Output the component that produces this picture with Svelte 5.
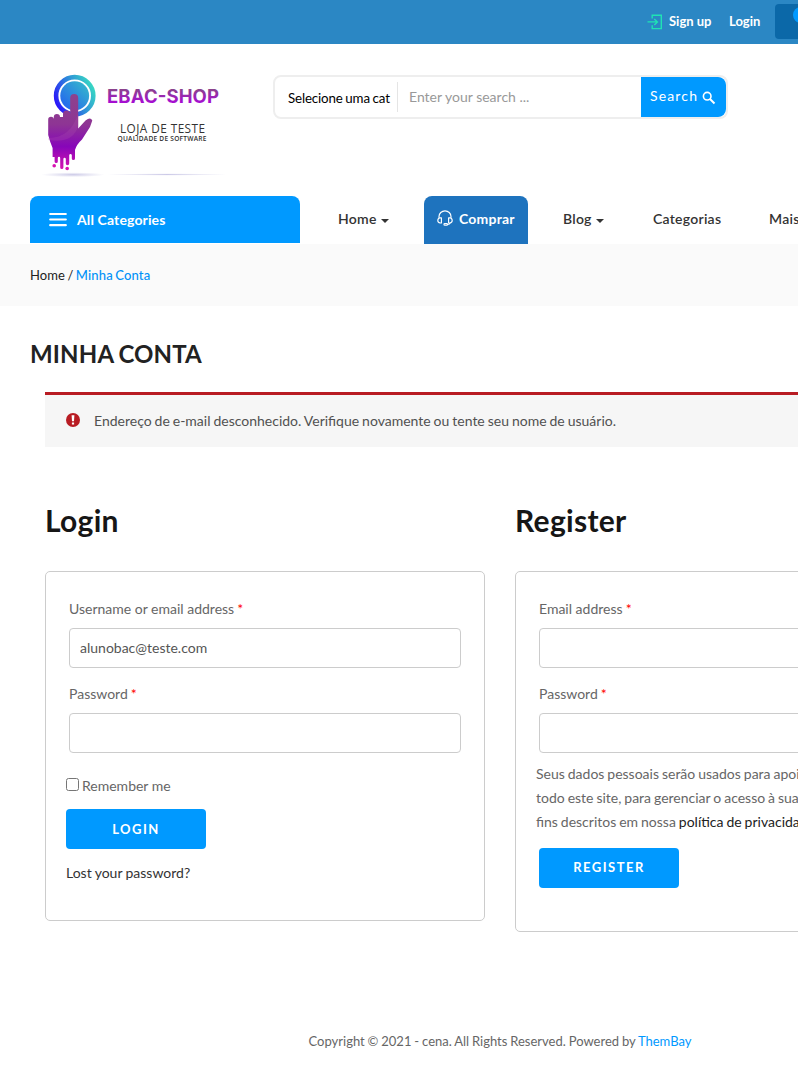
<script>
  let email = $state('alunobac@teste.com');
  let password = $state('');
  let newEmail = $state('');
  let newPassword = $state('');
  let remember = $state(false);
</script>

<div class="viewport">
  <div class="page">
    <div class="topbar">
      <a class="signup" href="#signup">
        <svg width="16" height="16" viewBox="0 0 16 16" fill="none" stroke="#1fe3b4" stroke-width="1.4">
          <path d="M5.2 4.5V1.2H14.3V14.6H5.2V11.3M0.5 7.9H10M7.3 4.9L10.4 7.9L7.3 10.9" />
        </svg>
        <span>Sign up</span>
      </a>
      <a class="signin" href="#login">Login</a>
      <div class="cart"><span class="badge"></span></div>
    </div>

    <header>
      <svg class="logo" width="200" height="125" viewBox="0 0 200 125">
        <defs>
          <linearGradient id="ring" x1="0" y1="0.75" x2="1" y2="0.25">
            <stop offset="0" stop-color="#2a12fa" /><stop offset="0.5" stop-color="#2d85dc" /><stop offset="1" stop-color="#38d8c3" />
          </linearGradient>
          <linearGradient id="disc" x1="0.1" y1="0.9" x2="0.9" y2="0.1">
            <stop offset="0" stop-color="#2466ee" /><stop offset="1" stop-color="#35b5cd" />
          </linearGradient>
          <linearGradient id="hand" x1="0" y1="0" x2="0" y2="1">
            <stop offset="0" stop-color="#8d438d" /><stop offset="0.4" stop-color="#8e3594" /><stop offset="0.7" stop-color="#8706b9" /><stop offset="1" stop-color="#d713b1" />
          </linearGradient>
          <linearGradient id="word" x1="0" y1="0" x2="0" y2="1">
            <stop offset="0.2" stop-color="#8b438d" /><stop offset="0.85" stop-color="#a808d8" />
          </linearGradient>
          <radialGradient id="shade"><stop offset="0" stop-color="#aaa6d8" stop-opacity="0.6" /><stop offset="1" stop-color="#b9b6dd" stop-opacity="0" /></radialGradient>
        </defs>
        <ellipse cx="43" cy="114.7" rx="32" ry="2.4" fill="url(#shade)" />
        <ellipse cx="137" cy="114.5" rx="60" ry="1.2" fill="url(#shade)" />
        <circle cx="44.7" cy="35.7" r="18.6" fill="none" stroke="url(#ring)" stroke-width="4.6" />
        <circle cx="44.7" cy="35.7" r="14.4" fill="url(#disc)" />
        <path fill="url(#hand)" d="M40.200 38a4 4 0 0 1 8 0V68.500L55.500 60.500Q60.500 56.500 62.300 60.500L60 67L52 79.500Q46.500 84.500 45 90V98.500a1.600 1.600 0 0 1-3.200 0V95a1.400 1.400 0 0 0-2.600 0V103.500a1.700 1.700 0 0 1-3.400 0V99a1.200 1.200 0 0 0-2.400 0V107.500a1.500 1.500 0 0 1-3.200 0V98a1.200 1.200 0 0 0-2.400 0V101.500a1.600 1.600 0 0 1-3.200 0V97H22.600V88Q20 82 18.200 75V59.500a2.800 2.800 0 0 1 5.600 0V57a3.100 3.100 0 0 1 6.200 0L33 57V54a3.400 3.400 0 0 1 7.200 0Z" />
        <path fill="#b45ab0" opacity="0.22" d="M18.300 60V78Q41 78 48.200 53V66Q43 84 18.300 80Z" />
        <circle cx="24.200" cy="105.700" r="1.800" fill="#d713b1" />
        <circle cx="37.200" cy="108.500" r="1.800" fill="#d713b1" />
        <text x="77" y="43" textLength="112" font-family="Inter, sans-serif" font-size="18.500" font-weight="700" fill="url(#word)">EBAC-SHOP</text>
        <text x="90" y="73" textLength="85" font-family="'Open Sans', sans-serif" font-size="11.800" fill="#333">LOJA DE TESTE</text>
        <text x="87.500" y="81" textLength="89" font-family="'Open Sans', sans-serif" font-size="6.600" font-weight="600" fill="#303030">QUALIDADE DE SOFTWARE</text>
      </svg>

      <form class="search" onsubmit={(e) => e.preventDefault()}>
        <div class="select">Selecione uma cat</div>
        <input type="text" placeholder="Enter your search ..." />
        <button type="submit">
          <span>Search</span>
          <svg width="14" height="14" viewBox="0 0 14 14" fill="none" stroke="#fff">
            <circle cx="5.200" cy="5.200" r="3.800" stroke-width="1.600" /><path d="M8 8L12.500 12.500" stroke-width="2" />
          </svg>
        </button>
      </form>
    </header>

    <nav>
      <div class="all">
        <svg width="18" height="16" viewBox="0 0 18 16" stroke="#fff" stroke-width="2.200" stroke-linecap="round"><path d="M1.200 2H16.800M1.200 7.500H16.800M1.200 13.200H16.800" /></svg>
        <span>All Categories</span>
      </div>
      <a class="home" href="#home">Home <i class="caret"></i></a>
      <a class="buy" href="#comprar">
        <svg width="16" height="16" viewBox="0 0 16 16" fill="none" stroke="#fff" stroke-width="1.150" stroke-linecap="round" stroke-linejoin="round">
          <path d="M2 8V6.500a6 5.700 0 0 1 12 0V8M4.400 7.800V13H3.200Q0.800 12.500 0.800 10.400T3.200 7.800ZM11.600 7.800V13H12.800Q15.200 12.500 15.200 10.400T12.800 7.800ZM13.500 13Q12.500 14.500 10.800 14.500" />
          <rect x="7" y="13.500" width="3.500" height="1.600" rx="0.700" />
        </svg>
        <span>Comprar</span>
      </a>
      <a class="blog" href="#blog">Blog <i class="caret"></i></a>
      <a class="cats" href="#categorias">Categorias</a>
      <a class="more" href="#mais">Mais</a>
    </nav>

    <div class="crumbs"><a href="#home">Home</a> / <b>Minha Conta</b></div>

    <main>
      <h1>MINHA CONTA</h1>
      <div class="alert">
        <svg width="14" height="14" viewBox="0 0 14 14"><circle cx="7" cy="7" r="7" fill="#b81c23" /><path d="M5.600 2.300H8.400L8 8.200H6ZM5.900 9.400H8.100V11.500H5.900Z" fill="#fff" /></svg>
        <span>Endereço de e-mail desconhecido. Verifique novamente ou tente seu nome de usuário.</span>
      </div>

      <div class="columns">
        <section>
          <h2>Login</h2>
          <form class="card login" onsubmit={(e) => e.preventDefault()}>
            <label for="user">Username or email address <em>*</em></label>
            <input id="user" type="text" bind:value={email} />
            <label for="pass">Password <em>*</em></label>
            <input id="pass" type="password" bind:value={password} />
            <label class="remember"><input type="checkbox" bind:checked={remember} /><span>Remember me</span></label>
            <button type="submit">LOGIN</button>
            <a class="lost" href="#lost">Lost your password?</a>
          </form>
        </section>
        <section>
          <h2>Register</h2>
          <form class="card register" onsubmit={(e) => e.preventDefault()}>
            <label for="mail">Email address <em>*</em></label>
            <input id="mail" type="text" bind:value={newEmail} />
            <label for="newpass">Password <em>*</em></label>
            <input id="newpass" type="password" bind:value={newPassword} />
            <p>Seus dados pessoais serão usados para apoiar<br />todo este site, para gerenciar o acesso à sua<br />fins descritos em nossa <a href="#privacy">política de privacidade</a></p>
            <button type="submit">REGISTER</button>
          </form>
        </section>
      </div>
    </main>

    <footer>Copyright © 2021 - cena. All Rights Reserved. Powered by <a href="#thembay">ThemBay</a></footer>
  </div>
</div>

<style>
  :global(body) { margin: 0; background: #fff; }
  .viewport { width: 100%; height: 1087px; overflow: hidden; font: 14px/24px Lato, sans-serif; color: #666; }
  a { color: inherit; text-decoration: none; }
  .page { width: 1000px; }
  .page :is(*) { box-sizing: border-box; }
  input, button { font-family: inherit; }

  .topbar { height: 44px; background: #2b87c4; display: flex; align-items: flex-start; padding-left: 647px; color: #fff; font-weight: 700; font-size: 13px; }
  .signup { display: flex; align-items: center; gap: 6px; width: 82px; margin-top: 9px; white-space: nowrap; }
  .signup svg { margin-top: 2px; }
  .signin { width: 46px; margin-top: 9px; }
  .cart { width: 130px; height: 35px; margin-top: 4px; border-radius: 4px; background: #0b68a8; position: relative; }
  .badge { position: absolute; left: 18px; top: 3px; width: 16px; height: 16px; border-radius: 50%; background: #09f; }

  header { height: 152px; padding: 16px 0 0 30px; display: flex; align-items: flex-start; }
  .logo { flex: none; }
  .search { display: flex; width: 455px; height: 44px; margin: 15px 0 0 43px; border: 2px solid #eee; border-radius: 8px; overflow: hidden; }
  .select { width: 123px; margin: 5px 0; padding: 4px 0 0 13px; border-right: 1px solid #e5e5e5; color: #000; font-size: 13.333px; letter-spacing: -0.150px; word-spacing: -0.600px; white-space: nowrap; line-height: 24px; }
  .search input { flex: 1; min-width: 0; border: 0; outline: 0; padding: 0 11px 2px; font-size: 14px; color: #666; }
  .search input::placeholder { color: #999; }
  .search button { width: 85px; padding: 0 0 3px 9px; border: 0; border-radius: 0 8px 8px 0; background: #09f; color: #fff; font-size: 14px; letter-spacing: 1.150px; display: flex; align-items: center; gap: 4px; }
  .search button svg { margin-top: 5px; }

  nav { display: flex; height: 48px; padding-left: 30px; line-height: 46px; font-weight: 700; color: #333; white-space: nowrap; letter-spacing: 0.130px; }
  .all { width: 270px; height: 47px; border-radius: 8px 8px 0 0; background: #09f; color: #fff; display: flex; align-items: center; gap: 10px; padding-left: 19px; }
  .home { width: 86px; margin-left: 38px; }
  .home, .blog, .cats, .more { font-weight: 600; letter-spacing: 0.250px; }
  .buy { display: flex; align-items: center; width: 104px; padding-left: 13px; gap: 6px; color: #fff; background: #1e73be; border-radius: 8px 8px 0 0; line-height: 46px; letter-spacing: 0.200px; }
  .buy svg { margin-top: -4px; }
  .buy span { margin-top: -2px; }
  .blog { width: 90px; margin-left: 35px; }
  .cats { width: 116px; }
  .caret { display: inline-block; border: 4px solid transparent; border-top-color: #333; border-bottom: 0; vertical-align: 1px; margin-left: 1px; }

  .crumbs { height: 62px; background: #fafafa; padding: 19px 30px; font-size: 13px; color: #222; word-spacing: -0.900px; }
  .crumbs a { letter-spacing: 0.100px; }
  .crumbs b { color: #0091f8; font-weight: 500; letter-spacing: 0.150px; }

  main { padding: 0 30px; }
  h1 { margin: 0; padding-top: 33px; height: 86px; font-size: 24px; line-height: 30px; font-weight: 700; color: #222; word-spacing: -1px; letter-spacing: 0.150px; }
  .alert { margin-left: 15px; height: 55px; border-top: 3px solid #b81c23; background: #f6f6f6; display: flex; align-items: center; padding-left: 21px; gap: 14px; color: #515151; word-spacing: -0.640px; }
  .alert svg { margin-top: -3px; }
  .columns { display: grid; grid-template-columns: 440px 440px; gap: 30px; align-items: start; padding: 53px 0 0 15px; }
  h2 { margin: 0; height: 71px; line-height: 40px; font-size: 30px; font-weight: 700; color: #161616; letter-spacing: 0.300px; }
  .card { display: flex; flex-direction: column; border: 1px solid #ccc; border-radius: 5px; padding: 25px 23px 0; }
  .login { height: 350px; }
  .register { height: 361px; }
  em { color: #f00; font-style: normal; margin-left: -0.500px; }
  .card > input { height: 40px; margin: 7px 0 14px; border: 1px solid #ccc; border-radius: 4px; padding: 0 10px 2px; font-size: 14px; color: #555; outline: 0; }
  .remember { display: flex; align-items: center; gap: 3px; margin: 7px 0 11px -3px; height: 24px; }
  .remember input { width: 13px; height: 13px; margin: -4px 0 0; }
  .card button { flex: none; width: 140px; height: 40px; border: 0; border-radius: 4px; background: #09f; color: #fff; font-size: 13px; font-weight: 700; letter-spacing: 1.500px; padding: 0; }
  .register button { padding-bottom: 2px; }
  .login button, .lost { margin-left: -3px; }
  .lost { margin-top: 12px; color: #333; word-spacing: -0.300px; }
  p { margin: -5px 0 14px -3px; white-space: nowrap; word-spacing: -0.650px; }
  p a { color: #222; }

  footer { margin-top: 97px; text-align: center; font-size: 13px; word-spacing: -0.450px; }
  footer a { color: #09f; }
</style>
